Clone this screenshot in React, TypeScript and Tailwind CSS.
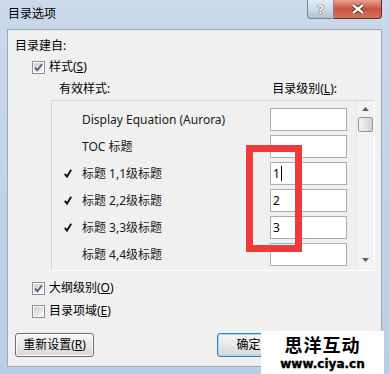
import React from "react";

const font = "font-['Noto_Sans','Noto_Sans_CJK_SC',sans-serif]";

function CheckBox({ checked }: { checked?: boolean }) {
  return (
    <span className="w-[13px] h-[13px] border border-[#8e8f8f] bg-white p-px shrink-0">
      <span className="w-full h-full flex items-center justify-center bg-gradient-to-br from-[#c9ccd1] to-[#f7f7f7]">
        {checked && (
          <svg width="9" height="9" viewBox="0 0 9 9">
            <path d="M1 4.6 L3.4 7.2 L8 1.2" fill="none" stroke="#4a5a85" strokeWidth="1.8" />
          </svg>
        )}
      </span>
    </span>
  );
}

function Tick() {
  return (
    <svg width="8" height="9" viewBox="0 0 8 9">
      <path d="M0.8 4.8 L3 7.6 L7.2 0.8" fill="none" stroke="#111" strokeWidth="1.9" />
    </svg>
  );
}

const rows = [
  { name: "Display Equation (Aurora)", level: "", tick: false },
  { name: "TOC 标题", level: "", tick: false },
  { name: "标题 1,1级标题", level: "1", tick: true, caret: true },
  { name: "标题 2,2级标题", level: "2", tick: true },
  { name: "标题 3,3级标题", level: "3", tick: true },
  { name: "标题 4,4级标题", level: "", tick: false },
];

function Button({ children, primary }: { children?: React.ReactNode; primary?: boolean }) {
  return (
    <div
      className={`h-[24px] rounded-[3px] border flex items-center justify-center bg-gradient-to-b from-[#f6f6f6] via-[#e9e9e9] to-[#d6d6d6] ${
        primary ? "border-[#3c7fb1] shadow-[inset_0_0_0_1px_#a6d9f4]" : "border-[#707070] shadow-[inset_0_0_0_1px_#fbfbfb]"
      }`}
    >
      {children}
    </div>
  );
}

export default function App() {
  return (
    <div className={`relative w-[389px] h-[374px] overflow-hidden bg-gradient-to-b from-[#cbd9ea] via-[#c2d3e7] to-[#b9cde4] text-[12px] text-black ${font}`}>
      {/* title bar */}
      <div className="h-[29px] flex items-start justify-between">
        <span className="ml-[8px] mt-[6px] leading-[16px] text-[12px]">目录选项</span>
        <div className="flex mr-[7px]">
          <div className="w-[27px] h-[19px] rounded-bl-[4px] border border-t-0 border-[#76889d] bg-gradient-to-b from-[#e4ebf3] via-[#cfdae6] to-[#b2c1d2] flex items-center justify-center">
            <span className="text-[13px] leading-none font-bold text-white [text-shadow:0_0_1px_#333,0_0_1px_#333]">?</span>
          </div>
          <div className="w-[48px] h-[19px] rounded-br-[4px] border border-t-0 border-l-0 border-[#6b2a22] bg-gradient-to-b from-[#e5a08f] via-[#c9513e] to-[#d4765b] flex items-center justify-center">
            <svg width="14" height="10" viewBox="0 0 14 10">
              <path d="M2 1 L12 9 M12 1 L2 9" stroke="#3a1a14" strokeWidth="4" />
              <path d="M2 1 L12 9 M12 1 L2 9" stroke="#ffffff" strokeWidth="2.4" />
            </svg>
          </div>
        </div>
      </div>

      {/* client area */}
      <div className="ml-[7px] w-[375px] h-[338px] border border-[#a0a8b3] bg-[#f0f0f0] flex flex-col">
        <div className="mt-[8px] ml-[7px] leading-[16px]">目录建自:</div>
        <div className="mt-[5px] ml-[24px] h-[16px] flex items-center gap-[4px]">
          <CheckBox checked />
          <span>样式(<u>S</u>)</span>
        </div>
        <div className="mt-[6px] h-[16px] flex leading-[16px]">
          <span className="ml-[51px]">有效样式:</span>
          <span className="ml-[162px]">目录级别(<u>L</u>):</span>
        </div>

        {/* style list */}
        <div className="mt-[3px] ml-[43px] w-[324px] h-[171px] border border-t-[#d5d5d5] border-l-[#d5d5d5] border-r-white border-b-white flex overflow-hidden">
          <div className="flex-1 pt-[5px] flex flex-col">
            {rows.map((r) => (
              <div key={r.name} className="h-[27px] shrink-0 flex items-center">
                <span className="w-[30px] flex justify-center pl-[1px]">{r.tick && <Tick />}</span>
                <span className="flex-1 text-[#1a1a1a]">{r.name}</span>
                <div className="w-[77px] h-[23px] mr-[9px] bg-white border border-[#abadb3] flex items-center pl-[2px]">
                  <span>{r.level}</span>
                  {r.caret && <span className="w-px h-[15px] bg-black ml-px" />}
                </div>
              </div>
            ))}
          </div>
          {/* scrollbar */}
          <div className="w-[18px] bg-[#f3f3f3] border-l border-[#e6e6e6] flex flex-col items-center">
            <div className="h-[16px] flex items-center justify-center">
              <svg width="7" height="4" viewBox="0 0 7 4"><path d="M0 4 L3.5 0 L7 4 Z" fill="#606060" /></svg>
            </div>
            <div className="w-[15px] h-[15px] rounded-[2px] border border-[#979797] bg-gradient-to-r from-[#f4f4f4] via-[#e4e4e4] to-[#cfcfcf]" />
            <div className="flex-1" />
            <div className="h-[16px] mb-[2px] flex items-center justify-center">
              <svg width="7" height="4" viewBox="0 0 7 4"><path d="M0 0 L7 0 L3.5 4 Z" fill="#606060" /></svg>
            </div>
          </div>
        </div>

        <div className="mt-[9px] ml-[24px] h-[16px] flex items-center gap-[4px]">
          <CheckBox checked />
          <span>大纲级别(<u>O</u>)</span>
        </div>
        <div className="mt-[7px] ml-[24px] h-[16px] flex items-center gap-[4px]">
          <CheckBox />
          <span>目录项域(<u>E</u>)</span>
        </div>

        <div className="mt-[14px] flex">
          <div className="ml-[7px] w-[79px]">
            <Button>重新设置(<u>R</u>)</Button>
          </div>
          <div className="ml-[123px] w-[75px]">
            <Button primary>
              <span className="mr-[12px]">确定</span>
            </Button>
          </div>
        </div>
      </div>

      {/* red annotation */}
      <div className="absolute left-[246px] top-[145px] w-[56px] h-[107px] border-[7px] border-[#ef3a3a]" />

      {/* watermark */}
      <div className="absolute left-[261px] top-[331px] w-[123px] h-[43px] bg-white flex flex-col items-center">
        <span className="text-[18px] leading-[26px] font-bold tracking-[1px] font-['Noto_Sans_CJK_SC',sans-serif]">思洋互动</span>
        <span className="text-[12px] leading-[14px] font-bold font-['DejaVu_Sans',sans-serif] [-webkit-text-stroke:0.4px_#000]">www.ciya.cn</span>
      </div>
    </div>
  );
}
